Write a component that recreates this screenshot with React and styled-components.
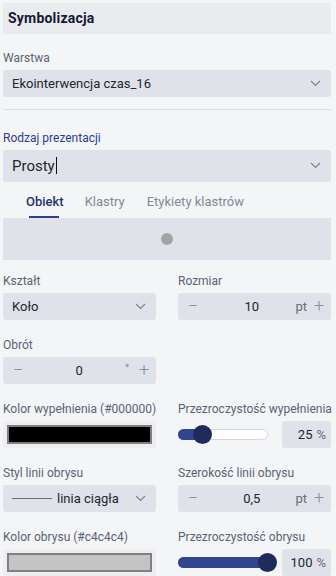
import React from "react";
import styled, { createGlobalStyle } from "styled-components";

const Global = createGlobalStyle`
  html, body { margin: 0; padding: 0; background: #f4f5f7; }
  body { font-family: Roboto, "Noto Sans", "Liberation Sans", sans-serif; }
  * { box-sizing: border-box; }
`;

const Panel = styled.div`
  width: 336px;
  height: 576px;
  overflow: hidden;
  padding: 3px 5px 0 3px;
  display: flex;
  flex-direction: column;
`;

const Header = styled.div`
  height: 31px;
  background: #e9ebee;
  display: flex;
  align-items: center;
  padding-left: 5px;
  font-weight: 700;
  font-size: 14px;
  color: #161a33;
  letter-spacing: 0.2px;
`;

const Field = styled.div`
  display: flex;
  flex-direction: column;
  gap: 4px;
  margin-top: ${(p) => p.$mt || 0}px;
`;

const Label = styled.div`
  font-size: 12px;
  line-height: 16px;
  color: ${(p) => (p.$accent ? "#2d3d8c" : "#5a6275")};
  white-space: nowrap;
`;

const SelectBox = styled.div`
  height: ${(p) => p.$h || 27}px;
  background: #dfe2e8;
  border-radius: 3px;
  display: flex;
  align-items: center;
  padding: 0 10px 0 ${(p) => p.$pl || 9}px;
  font-size: ${(p) => p.$fs || 13}px;
  color: #23262f;
`;

const SelectText = styled.span`
  flex: 1;
  display: flex;
  align-items: center;
  white-space: nowrap;
`;

const Caret = styled.span`
  display: inline-block;
  width: 1px;
  height: 17px;
  background: #111;
  margin-left: 1px;
`;

const Divider = styled.div`
  height: 1px;
  background: #dcdfe5;
  margin: 12px 0 0;
`;

const Tabs = styled.div`
  display: flex;
  padding-left: 15px;
  margin-top: 3px;
  height: 34px;
`;

const Tab = styled.div`
  padding: 0 8px;
  display: flex;
  align-items: center;
  position: relative;
  font-size: 13px;
  font-weight: ${(p) => (p.$active ? 500 : 400)};
  color: ${(p) => (p.$active ? "#26336b" : "#838896")};
  margin-right: ${(p) => p.$mr || 0}px;
  &::after {
    content: "";
    position: absolute;
    bottom: 0;
    left: 11px;
    right: 13px;
    height: 2px;
    background: ${(p) => (p.$active ? "#2d3d8c" : "transparent")};
  }
`;

const Preview = styled.div`
  height: 42px;
  background: #dfe2e8;
  display: flex;
  align-items: center;
  justify-content: center;
`;

const Dot = styled.div`
  width: 12px;
  height: 12px;
  border-radius: 50%;
  background: #a3a3a3;
`;

const Grid = styled.div`
  display: grid;
  grid-template-columns: 153px 153px;
  column-gap: 22px;
  row-gap: 17px;
  margin-top: 13px;
`;

const NumBox = styled.div`
  height: 27px;
  background: #dfe2e8;
  border-radius: 3px;
  display: flex;
  align-items: center;
  font-size: 13px;
  color: #23262f;
`;

const PM = styled.span`
  width: ${(p) => p.$w}px;
  display: flex;
  justify-content: center;
  align-items: center;
  color: #8a90a0;
  font-size: 18px;
  font-weight: 300;
  margin-top: -2px;
`;

const NumVal = styled.span`
  flex: 1;
  text-align: center;
`;

const Unit = styled.span`
  color: #676d7c;
  font-size: ${(p) => p.$fs || 13}px;
  margin-top: ${(p) => p.$mt || 0}px;
  margin-right: ${(p) => p.$mr || 0}px;
`;

const ColorWrap = styled.div`
  height: 27px;
  background: #eceef1;
  border-radius: 3px;
  padding: 4px;
  display: flex;
`;

const Swatch = styled.div`
  flex: 1;
  background: ${(p) => p.$c};
  border: 2px solid #808080;
`;

const SliderRow = styled.div`
  height: 27px;
  display: flex;
  align-items: center;
`;

const Track = styled.div`
  width: 90px;
  height: 11px;
  border-radius: 6px;
  background: #fff;
  border: 1px solid #d4d7dd;
  position: relative;
  margin-right: 14px;
`;

const Fill = styled.div`
  position: absolute;
  left: -1px;
  top: -1px;
  bottom: -1px;
  border-radius: 6px;
  background: #2f4590;
`;

const Thumb = styled.div`
  position: absolute;
  top: 50%;
  width: 19px;
  height: 19px;
  margin-left: -9.5px;
  margin-top: -9.5px;
  border-radius: 50%;
  background: #1f2b5b;
`;

const PctBox = styled.div`
  width: 49px;
  height: 27px;
  background: #dfe2e8;
  border-radius: 3px;
  display: flex;
  align-items: center;
  justify-content: flex-end;
  padding-right: 5px;
  gap: 4px;
  font-size: 13px;
  color: #23262f;
`;

const LineSample = styled.span`
  width: 40px;
  height: 1px;
  background: #6e6e6e;
  margin-right: 5px;
`;

const Chevron = () => (
  <svg width="11" height="7" viewBox="0 0 11 7">
    <path d="M1 1 L5.5 5.5 L10 1" fill="none" stroke="#7c8294" strokeWidth="1.2" />
  </svg>
);

const Select = ({ children, h, fs, pl }) => (
  <SelectBox $h={h} $fs={fs} $pl={pl}>
    <SelectText>{children}</SelectText>
    <Chevron />
  </SelectBox>
);

const Number = ({ value, unit, unitFs, unitMt, unitMr }) => (
  <NumBox>
    <PM $w={30}>−</PM>
    <NumVal>{value}</NumVal>
    <Unit $fs={unitFs} $mt={unitMt} $mr={unitMr}>{unit}</Unit>
    <PM $w={24}>+</PM>
  </NumBox>
);

const Slider = ({ pct, value }) => (
  <SliderRow>
    <Track>
      <Fill style={{ width: `calc(${pct}% + 1px)` }} />
      <Thumb style={{ left: `${pct}%` }} />
    </Track>
    <PctBox>
      <span>{value}</span>
      <Unit>%</Unit>
    </PctBox>
  </SliderRow>
);

export default function App() {
  return (
    <>
      <Global />
      <Panel>
        <Header>Symbolizacja</Header>
        <Field $mt={16}>
          <Label>Warstwa</Label>
          <Select>Ekointerwencja czas_16</Select>
        </Field>
        <Divider />
        <Field $mt={20}>
          <Label $accent>Rodzaj prezentacji</Label>
          <Select h={32} fs={15}>
            Prosty
            <Caret />
          </Select>
        </Field>
        <Tabs>
          <Tab $active $mr={5}>Obiekt</Tab>
          <Tab $mr={6}>Klastry</Tab>
          <Tab>Etykiety klastrów</Tab>
        </Tabs>
        <Preview>
          <Dot />
        </Preview>
        <Grid>
          <Field>
            <Label>Kształt</Label>
            <Select>Koło</Select>
          </Field>
          <Field>
            <Label>Rozmiar</Label>
            <Number value="10" unit="pt" />
          </Field>
          <Field>
            <Label>Obrót</Label>
            <Number value="0" unit="°" unitFs={10} unitMt={-4} unitMr={3} />
          </Field>
          <div />
          <Field>
            <Label>Kolor wypełnienia (#000000)</Label>
            <ColorWrap>
              <Swatch $c="#000000" />
            </ColorWrap>
          </Field>
          <Field>
            <Label>Przezroczystość wypełnienia</Label>
            <Slider pct={27} value="25" />
          </Field>
          <Field>
            <Label>Styl linii obrysu</Label>
            <Select>
              <LineSample />
              linia ciągła
            </Select>
          </Field>
          <Field>
            <Label>Szerokość linii obrysu</Label>
            <Number value="0,5" unit="pt" />
          </Field>
          <Field>
            <Label>Kolor obrysu (#c4c4c4)</Label>
            <ColorWrap>
              <Swatch $c="#c4c4c4" />
            </ColorWrap>
          </Field>
          <Field>
            <Label>Przezroczystość obrysu</Label>
            <Slider pct={100} value="100" />
          </Field>
        </Grid>
      </Panel>
    </>
  );
}
